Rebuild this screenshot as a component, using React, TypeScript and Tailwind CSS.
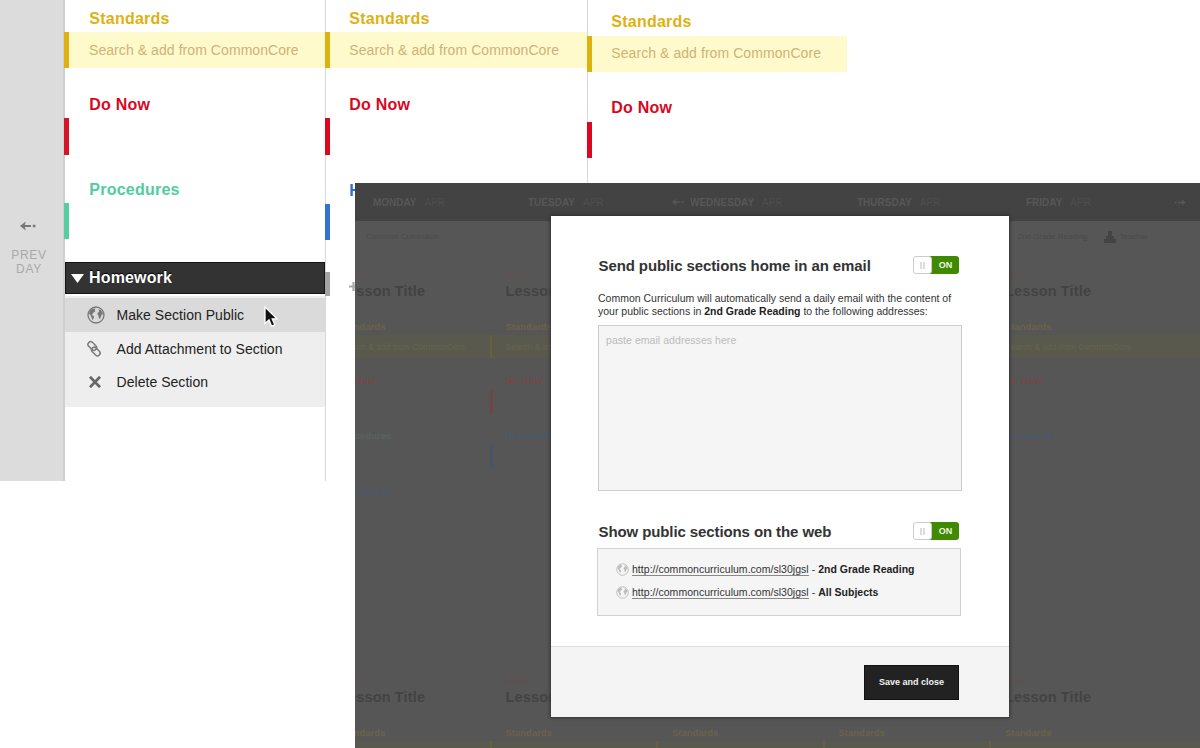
import React from "react";

function Globe({ className }: { className: string }) {
  return (
    <svg viewBox="0 0 18 18" className={className} fill="none">
      <circle cx="9" cy="9" r="8" stroke="currentColor" strokeWidth="1.3" />
      <path
        d="M3 4.2 6 2.4 8.6 2.8 7.600 4 8.400 5.200 6.800 6.200 6 7.600 4.800 8 5.800 9.400 7 10.400 6.800 12 5.600 14.200 4.600 12 3.800 9.800 2 7.600ZM11.400 3.400 13.600 3.800 15.400 6 15.900 8.600 14.600 8.400 13.900 11 12.600 13.200 11.700 11.200 11.500 9.400 10.300 8.500 10.800 6.800 12.200 5.700Z"
        fill="currentColor"
      />
    </svg>
  );
}

function LinkIcon() {
  return (
    <svg viewBox="0 0 18 18" className="h-[18px] w-[18px] text-[#7b7b7b]" fill="none" stroke="currentColor" strokeWidth="1.5">
      <g transform="rotate(45 9 9)">
        <rect x="0.800" y="5.400" width="9.800" height="5.400" rx="2.600" />
        <rect x="7.200" y="6.800" width="9.800" height="5.400" rx="2.600" />
      </g>
    </svg>
  );
}

function CrossIcon() {
  return (
    <svg viewBox="0 0 12 12" className="h-3 w-3 text-[#666]" stroke="currentColor" strokeWidth="2.7">
      <path d="M1 .8 11 11.200M11 .8 1 11.200" />
    </svg>
  );
}

function PrevArrow({ className }: { className: string }) {
  return (
    <svg viewBox="0 0 16 10" className={className} fill="currentColor">
      <path d="M0 5 5.8.5 4.8 4H11v2H4.8l1 3.5ZM12.800 3.800h2.600v2.400h-2.600Z" />
    </svg>
  );
}

function Section({ title, color }: { title: string; color: string }) {
  return (
    <h2 className={`flex flex-1 items-end pb-[1.400px] pl-[24.300px] text-[16px] leading-6 font-bold tracking-[0.240px] ${color}`}>{title}</h2>
  );
}

function StandardsField({ inset }: { inset: string }) {
  return (
    <div className={`flex h-9 items-center border-l-[5px] border-[#dfb110] bg-[#fffacc] text-[14px] tracking-[0.070px] text-[#d0b276] ${inset}`}>
      Search &amp; add from CommonCore
    </div>
  );
}

const row = "flex items-center text-[14px] tracking-[0.040px] text-[#222]";

function Planner() {
  return (
    <div className="flex h-[481px] w-[848px]">
      <aside className="flex w-[65px] shrink-0 flex-col items-center border-r-2 border-[#cfcfcf] bg-[#dcdcdc] pt-[221px] pr-2">
        <PrevArrow className="ml-[1px] h-[10px] w-4 text-[#777]" />
        <div className="mt-[17px] pl-[3px] text-center text-[12px] leading-[14px] tracking-[0.700px] text-[#a9a9a9]">
          PREV
          <br />
          DAY
        </div>
      </aside>
      <section className="-ml-px w-[261px] shrink-0">
        <div className="flex h-8 pl-px">
          <Section title="Standards" color="text-[#dfb110]" />
        </div>
        <StandardsField inset="pl-[20px]" />
        <div className="flex h-[50px] pl-px">
          <Section title="Do Now" color="text-[#d9081f]" />
        </div>
        <div className="h-[37px] w-[5px] bg-[#d41427]" />
        <div className="flex h-[48px] pl-px">
          <Section title="Procedures" color="text-[#50cd9e]" />
        </div>
        <div className="h-[36px] w-[5px] bg-[#56cea2]" />
        <div className="mt-[23px] ml-px flex h-8 items-center border border-[#151515] bg-[#333] pl-[5px]">
          <svg viewBox="0 0 13 9" className="h-[9px] w-[13px] fill-white">
            <path d="M0 0h13L6.500 9Z" />
          </svg>
          <span className="ml-[5px] text-[16px] font-bold tracking-[0.150px] text-white [text-shadow:0_-1px_1px_#000]">Homework</span>
        </div>
        <ul className="mt-[2px] ml-px h-[111px] bg-[#eee] pt-[2px]">
          <li className={`${row} h-[34px] bg-[#dadada] pt-px pl-[22px]`}>
            <Globe className="-mt-[2px] h-[18px] w-[18px] text-[#777]" />
            <span className="ml-[11.500px]">Make Section Public</span>
          </li>
          <li className={`${row} h-[33px] pt-px pl-[20px]`}>
            <LinkIcon />
            <span className="ml-[13.500px]">Add Attachment to Section</span>
          </li>
          <li className={`${row} h-[34px] pl-[24px]`}>
            <CrossIcon />
            <span className="ml-[15.500px]">Delete Section</span>
          </li>
        </ul>
      </section>
      <section className="w-[262px] shrink-0 bg-[linear-gradient(90deg,#d8d8d8_1px,transparent_1px)]">
        <div className="flex h-8">
          <Section title="Standards" color="text-[#dfb110]" />
        </div>
        <StandardsField inset="pl-[19.300px]" />
        <div className="flex h-[50px]">
          <Section title="Do Now" color="text-[#d9081f]" />
        </div>
        <div className="h-[37px] w-[5px] bg-[#dd0820]" />
        <div className="flex h-[49px]">
          <Section title="Homework" color="text-[#2d6fc8]" />
        </div>
        <div className="h-[36px] w-[5px] bg-[#3474cb]" />
        <div className="mt-8 flex h-6 items-center">
          <div className="h-6 w-[5px] bg-[#a4a4a4]" />
          <svg viewBox="0 0 9 9" className="mt-[4px] ml-[19px] h-[9px] w-[9px] fill-[#aaa]">
            <path d="M3.400 0h2.200v3.400H9v2.200H5.600V9H3.400V5.600H0V3.400h3.400Z" />
          </svg>
        </div>
      </section>
      <section className="w-[260px] shrink-0 bg-[linear-gradient(90deg,#d8d8d8_1px,transparent_1px)]">
        <div className="flex h-[35.500px]">
          <Section title="Standards" color="text-[#dfb110]" />
        </div>
        <StandardsField inset="pl-[19.300px]" />
        <div className="flex h-[50px]">
          <Section title="Do Now" color="text-[#d9081f]" />
        </div>
        <div className="h-[36.500px] w-[4.500px] bg-[#dd0820]" />
      </section>
    </div>
  );
}

function Toggle() {
  return (
    <div className="flex h-[18px] w-[46px] rounded-[3px] bg-[linear-gradient(90deg,#fff_14px,#3f8a00_14px)]">
      <div className="flex h-full w-[19px] items-center justify-center gap-[1px] rounded-[3px] border border-[#ccc] bg-white">
        <i className="h-[7px] w-[2px] bg-[#ddd]" />
        <i className="h-[7px] w-[2px] bg-[#ddd]" />
      </div>
      <span className="flex flex-1 items-center justify-center pt-px text-[9px] font-bold text-[#eef6e8]">ON</span>
    </div>
  );
}

const columns = [
  { second: "Procedures", tone: "text-[#566361]", bar: "bg-transparent", third: "Homework", covered: false },
  { second: "Homework", tone: "text-[#4c596b]", bar: "bg-[#485567]", third: "", covered: false },
  { second: "", tone: "", bar: "bg-transparent", third: "", covered: true },
  { second: "", tone: "", bar: "bg-transparent", third: "", covered: true },
  { second: "Homework", tone: "text-[#4c596b]", bar: "bg-transparent", third: "", covered: false },
];

const column = "shrink-0 text-[9.500px] leading-[12px] font-bold last:w-[220px]";

function StandardsGhost() {
  return (
    <>
      <div className="pl-4 text-[#6a6349]">Standards</div>
      <div className="mt-[2px] flex h-[23px] items-center border-l-2 border-[#67603f] bg-[#5a594d] pl-[14px] text-[8.500px] font-normal text-[#67624e]">
        Search &amp; add from CommonCore
      </div>
    </>
  );
}

function LessonGhost() {
  return (
    <>
      <div className="pl-4 text-[7px] leading-[10px] font-normal text-[#63504e]">Lesson</div>
      <div className="mt-[2px] pl-4 text-[14.500px] leading-[18px] tracking-[0.150px] text-[#434343]">Lesson Title</div>
    </>
  );
}

function DayColumn({ second, tone, bar, third, covered }: (typeof columns)[number]) {
  if (covered) return <div className={`w-[166.500px] ${column}`} />;
  return (
    <div className={`w-[166.500px] ${column}`}>
      <LessonGhost />
      <div className="h-[21px]" />
      <StandardsGhost />
      <div className="mt-[17px] pl-4 tracking-[0.300px] text-[#77474b]">Do Now</div>
      <div className="mt-[2px] h-6 w-[3px] bg-[#70454a]" />
      <div className={`mt-[17px] pl-4 ${tone}`}>{second}</div>
      <div className={`mt-[3px] h-[23px] w-[3px] ${bar}`} />
      <div className="mt-[18px] h-3 pl-4 text-[#4c596b]">{third}</div>
    </div>
  );
}

const days = [
  { name: "MONDAY", width: "w-[155px]" },
  { name: "TUESDAY", width: "w-[144px]" },
  { name: "WEDNESDAY", width: "w-[185px]" },
  { name: "THURSDAY", width: "w-[169px]" },
  { name: "FRIDAY", width: "w-[148px]" },
];

function Backdrop() {
  return (
    <div className="h-full bg-[#565656]">
      <div className="flex h-[38px] items-center bg-[#434343] pl-[18px] text-[10px] font-bold text-[#575757]">
        {days.map((day) => (
          <div key={day.name} className={`flex shrink-0 items-center whitespace-nowrap ${day.width}`}>
            {day.name === "WEDNESDAY" && <PrevArrow className="mr-[6px] h-[8px] w-3" />}
            {day.name}
            <span className="ml-2 font-normal text-[#4e4e4e]">APR</span>
          </div>
        ))}
        <PrevArrow className="h-[7px] w-3 rotate-180" />
      </div>
      <div className="flex h-[32px] items-center justify-between pr-[52px] pl-[11px] text-[8px] text-[#4a4a4a]">
        <span>Common Curriculum</span>
        <div className="flex items-center">
          <span>2nd Grade Reading</span>
          <svg viewBox="0 0 12 12" className="mr-1 ml-4 h-3 w-3 fill-[#444]">
            <path d="M4 0h4v5h2v3h2v4H0V8h2V5h2Z" />
          </svg>
          <span>Teacher</span>
        </div>
      </div>
      <div className="-ml-8 flex h-[406px] pt-[17px]">
        {columns.map((item, index) => (
          <DayColumn key={index} {...item} />
        ))}
      </div>
      <div className="-ml-8 flex pt-[17px]">
        {columns.map((item, index) => (
          <div key={index} className={`w-[166.500px] ${column}`}>
            {item.covered ? <div className="h-[30px]" /> : <LessonGhost />}
            <div className="h-[21px]" />
            <StandardsGhost />
          </div>
        ))}
      </div>
    </div>
  );
}

function PublicLink({ label }: { label: string }) {
  return (
    <div className="flex h-[23px] items-center text-[10.500px] leading-[12px] text-[#333]">
      <Globe className="mr-[3.500px] h-[13px] w-[13px] text-[#bdbdbd]" />
      <span className="border-b border-[#888] tracking-[0.030px]">http://commoncurriculum.com/sl30jgsl</span>
      <span className="-mt-px ml-[3px]">-</span>
      <b className="-mt-px ml-[3px] text-[#222]">{label}</b>
    </div>
  );
}

function Modal() {
  return (
    <div className="absolute top-[33px] left-[196px] flex h-[501px] w-[458px] flex-col bg-white shadow-[0_0_3px_1px_#333]">
      <div className="flex-1 pt-10 pr-[50px] pl-[47px]">
        <div className="flex h-[18px] items-center justify-between pl-[0.500px]">
          <h3 className="pt-[2px] text-[15px] font-bold tracking-[-0.100px] text-[#333]">Send public sections home in an email</h3>
          <Toggle />
        </div>
        <p className="mt-[18px] text-[10.500px] leading-[12.500px] whitespace-nowrap text-[#333]">
          Common Curriculum will automatically send a daily email with the content of
          <br />
          your public sections in <b className="text-[#222]">2nd Grade Reading</b> to the following addresses:
        </p>
        <div className="mt-2 h-[166px] w-[364px] border border-[#ccc] bg-[#f5f5f5] px-[7px] pt-[8px] text-[10.500px] leading-[13px] tracking-[0.050px] text-[#bcbcbc]">
          paste email addresses here
        </div>
        <div className="mt-[31px] flex h-[18px] items-center justify-between pl-[0.500px]">
          <h3 className="pt-[3px] text-[15px] font-bold tracking-[-0.100px] text-[#333]">Show public sections on the web</h3>
          <Toggle />
        </div>
        <div className="mt-2 -ml-px h-[68px] w-[364px] border border-[#d2d2d2] bg-[#f5f5f5] pt-[9px] pl-[17.500px]">
          <PublicLink label="2nd Grade Reading" />
          <PublicLink label="All Subjects" />
        </div>
      </div>
      <footer className="flex h-[71px] shrink-0 justify-end border-t border-[#ddd] bg-[#f4f4f4] pt-[18px] pr-[50px]">
        <button className="h-[35px] w-[95px] border border-[#111] bg-[#222] text-[9px] font-bold text-[#f2f2f2]">Save and close</button>
      </footer>
    </div>
  );
}

export default function App() {
  return (
    <main className="relative h-[748px] w-[1200px] overflow-hidden bg-white font-['Liberation_Sans',Arial,sans-serif]">
      <Planner />
      <svg viewBox="0 0 14 22" className="absolute top-[306px] left-[264px] h-[22px] w-[14px]">
        <path d="M1 1v16.500l4-3.600 2.600 6.300 3.200-1.400-2.600-6H13Z" fill="#111" stroke="#fff" strokeWidth="1.300" />
      </svg>
      <div className="absolute top-[183px] left-[355px] h-[565px] w-[845px] overflow-hidden">
        <Backdrop />
        <Modal />
      </div>
    </main>
  );
}
